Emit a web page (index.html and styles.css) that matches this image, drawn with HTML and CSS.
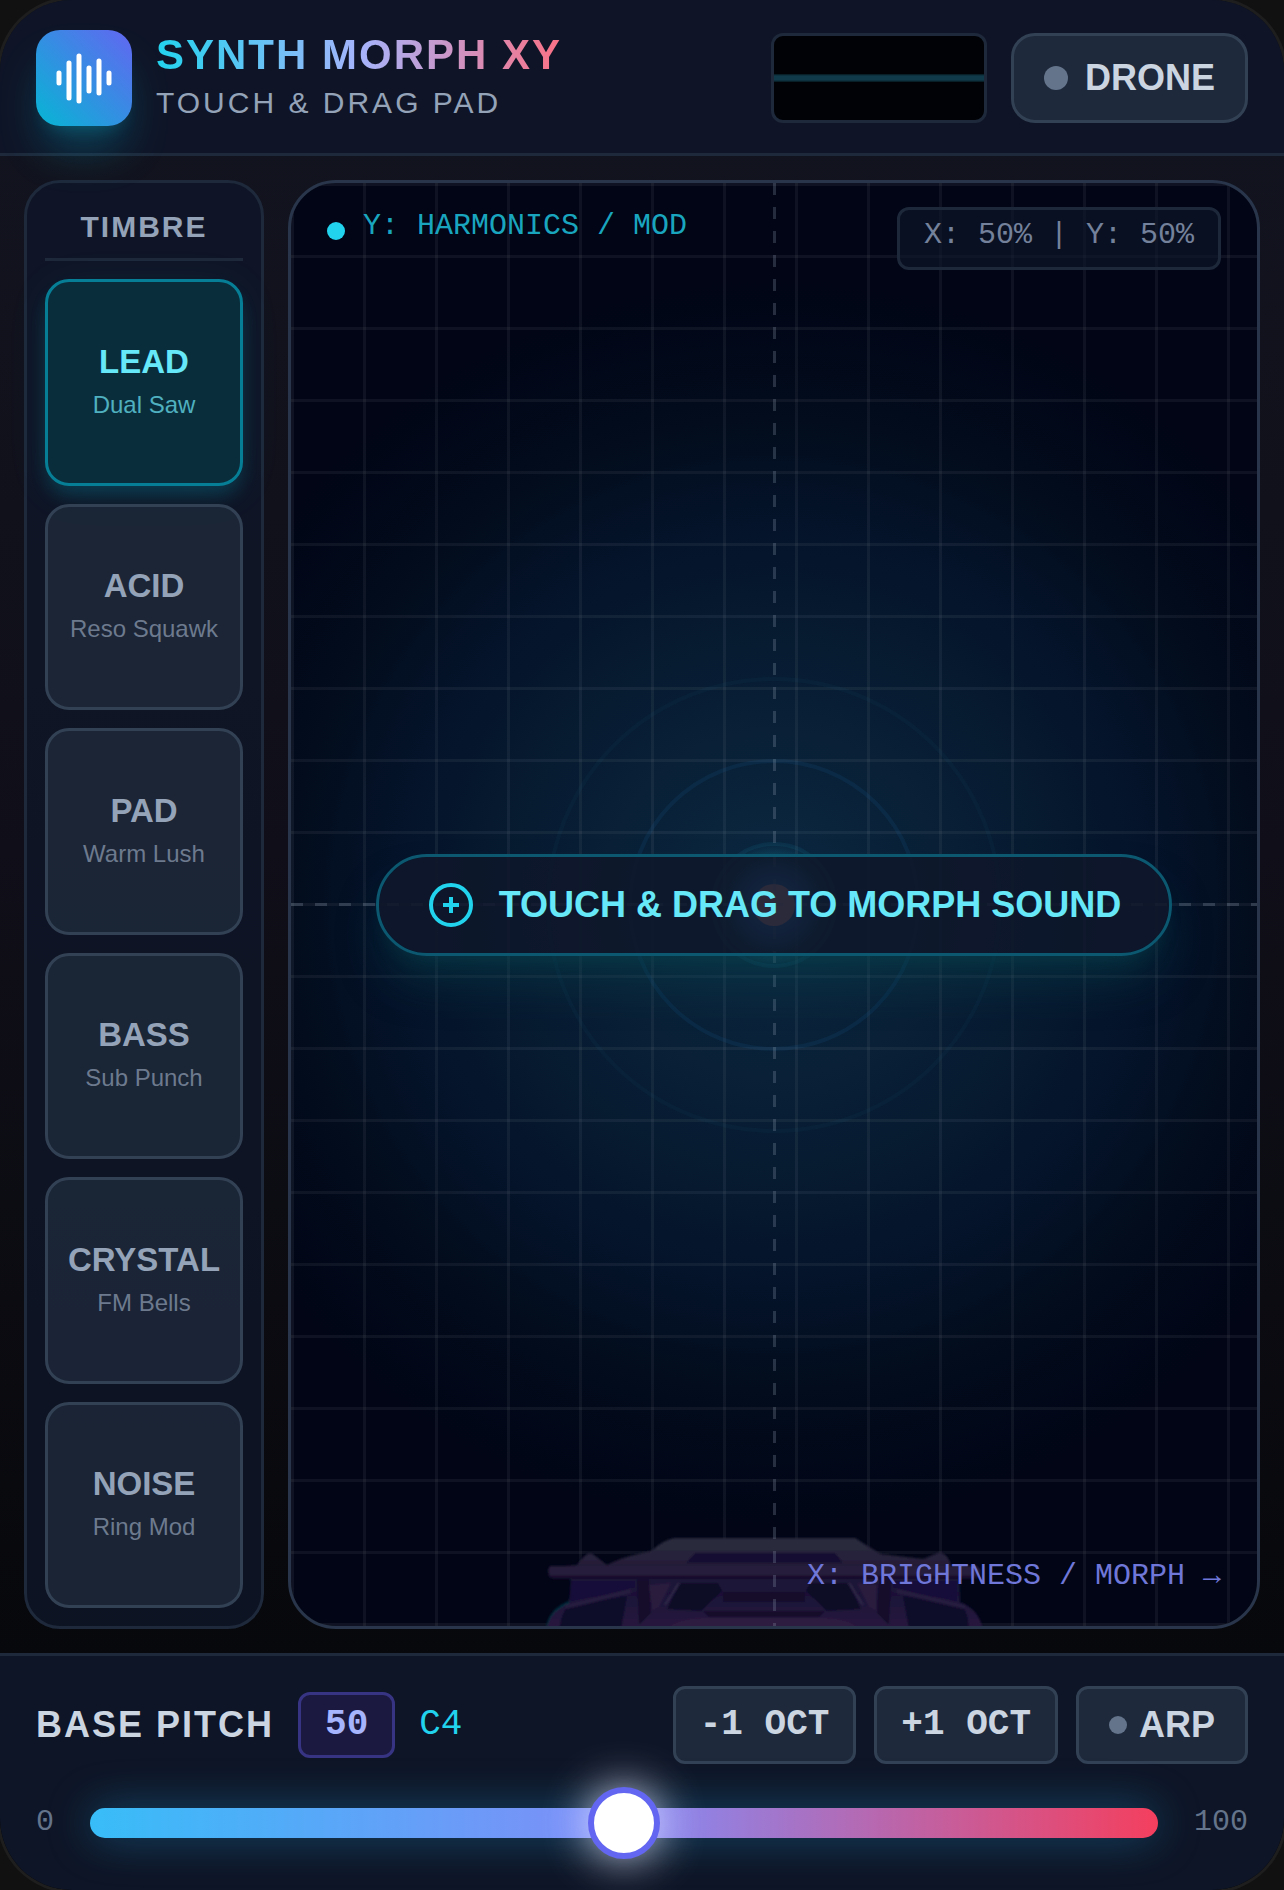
FILE: index.html
```html
<!DOCTYPE html>
<html lang="en">
<head>
    <meta charset="UTF-8">
    <meta name="viewport" content="width=device-width, initial-scale=1">
    <title>Synth Morph XY</title>
    <link rel="stylesheet" href="styles.css">
</head>
<body>
<div class="synth">
    <header class="top">
        <div class="logo">
            <svg width="60" height="60" viewBox="0 0 60 60" fill="none" stroke="#fff" stroke-width="5" stroke-linecap="round">
                <path d="M10 25v10M20 15v35M30 8v45M40 20v23M50 13v32M60 25v10"/>
            </svg>
        </div>
        <div class="title">
            <h1>SYNTH MORPH XY</h1>
            <p>TOUCH &amp; DRAG PAD</p>
        </div>
        <div class="scope"></div>
        <button type="button" class="drone"><i class="led"></i>DRONE</button>
    </header>

    <main class="main">
        <section class="timbre">
            <h2>TIMBRE</h2>
            <button type="button" class="preset active"><b>LEAD</b><span>Dual Saw</span></button>
            <button type="button" class="preset"><b>ACID</b><span>Reso Squawk</span></button>
            <button type="button" class="preset"><b>PAD</b><span>Warm Lush</span></button>
            <button type="button" class="preset"><b>BASS</b><span>Sub Punch</span></button>
            <button type="button" class="preset"><b>CRYSTAL</b><span>FM Bells</span></button>
            <button type="button" class="preset"><b>NOISE</b><span>Ring Mod</span></button>
        </section>

        <section class="pad" id="pad">
            <!-- car silhouette -->
            <svg class="car" width="460" height="105" viewBox="0 0 460 105">
                <defs>
                    <linearGradient id="body" x1="0" y1="0" x2="0" y2="1">
                        <stop offset="0" stop-color="#2c2c3e"/>
                        <stop offset=".35" stop-color="#231a38"/>
                        <stop offset=".6" stop-color="#1a1139"/>
                        <stop offset="1" stop-color="#291a3e"/>
                    </linearGradient>
                    <filter id="soft"><feGaussianBlur stdDeviation="1"/></filter>
                </defs>
                <g filter="url(#soft)">
                <path d="M11 105Q12 85 34 76L38 60 35 54 60 52 400 52 424 54 425 78Q443 86 447 105Z" fill="#04303f"/>
                <path d="M12 105Q14 86 34 79L36 54 15 53Q11 47 18 42L42 40Q50 28 56 28Q62 32 72 40Q86 32 116 26Q130 14 140 13L320 13Q334 22 346 29L388 34 405 27Q414 30 416 41L440 43Q448 47 443 53L424 54 425 77Q444 84 448 105Z" fill="url(#body)"/>
                <path d="M140 13H318Q328 18 333 25H118Q130 15 140 13Z" fill="#2a2c3e"/>
                <path d="M160 28H300L308 38H151Z" fill="#171033"/>
                <path d="M15 41H442Q448 46 443 50H15Q11 46 15 41Z" fill="#251a3a"/>
                <path d="M14 51H444L438 54H18Z" fill="#130d29"/>
                <path d="M102 55H114L116 88 104 100Z" fill="#120e2b"/>
                <path d="M356 55H344L342 88 354 100Z" fill="#120e2b"/>
                <path d="M114 60L136 58 124 82 117 86Z" fill="#2b1a3e"/>
                <path d="M342 60L322 58 334 82 341 86Z" fill="#2b1a3e"/>
                <path d="M145 58H183L187 66 166 86 132 84Z" fill="#110e28"/>
                <path d="M313 58H275L271 66 292 86 326 84Z" fill="#110e28"/>
                <path d="M188 67H270V77H188ZM168 86H290L284 92H174Z" fill="#120d2b"/>
                <path d="M144 58L130 80M314 58L328 80" stroke="#322a48" stroke-width="2"/>
                <path d="M36 56H100V62L36 76Z" fill="#180f3a"/>
                <path d="M422 56H358V62L422 76Z" fill="#180f3a"/>
                <path d="M34 79L92 71 86 105H24Q26 88 34 79Z" fill="#110d29"/>
                <path d="M426 79L368 71 374 105H434Q434 88 426 79Z" fill="#110d29"/>
                <path d="M30 82L96 66M430 82L362 66" stroke="#281c40" stroke-width="4"/>
                <path d="M130 105Q140 94 166 93H292Q316 94 326 105Z" fill="#2e1a3f"/>
                </g>
            </svg>

            <svg class="rings" width="462" height="462" viewBox="-231 -231 462 462" fill="none">
                <defs>
                    <radialGradient id="glow">
                        <stop offset="0" stop-color="#60a5fa"/>
                        <stop offset=".5" stop-color="#38a0f8" stop-opacity=".5"/>
                        <stop offset=".8" stop-color="#22d3ee" stop-opacity=".12"/>
                        <stop offset="1" stop-color="#22d3ee" stop-opacity="0"/>
                    </radialGradient>
                </defs>
                <circle r="226" stroke="#1b6a90" stroke-opacity=".08" stroke-width="4"/>
                <circle r="144" stroke="#1b6ab0" stroke-opacity=".12" stroke-width="4"/>
                <circle r="61" stroke="#22b5d0" stroke-opacity=".09" stroke-width="4"/>
                <circle r="62" fill="url(#glow)"/>
                <circle r="21" fill="#f2b0a8"/>
            </svg>

            <div class="pad-top">
                <div class="axis-y"><i></i><span>Y: HARMONICS / MOD</span></div>
                <div class="coords">X: 50% | Y: 50%</div>
            </div>
            <div class="hint">
                <svg width="48" height="48" viewBox="0 0 24 24" fill="none" stroke="#22d3ee" stroke-width="2">
                    <circle cx="12" cy="12" r="10"/>
                    <path d="M12 8v8M8 12h8"/>
                </svg>
                TOUCH &amp; DRAG TO MORPH SOUND
            </div>
            <div class="axis-x">X: BRIGHTNESS / MORPH →</div>
        </section>
    </main>

    <footer class="bottom">
        <div class="row">
            <label for="pitch">BASE PITCH</label>
            <output class="value" for="pitch">50</output>
            <span class="note">C4</span>
            <div class="btns">
                <button type="button" class="oct">-1 OCT</button>
                <button type="button" class="oct">+1 OCT</button>
                <button type="button" class="arp"><i class="led"></i>ARP</button>
            </div>
        </div>
        <div class="slide">
            <span>0</span>
            <input type="range" id="pitch" min="0" max="100" value="50">
            <span>100</span>
        </div>
    </footer>
</div>
</body>
</html>
```
FILE: styles.css
```css
* {
    margin: 0;
    padding: 0;
    box-sizing: border-box;
}
body {
    background: #111;
    color: #cbd5e1;
    font-family: "Liberation Sans", Arial, sans-serif;
    font-size: 36px;
}
button {
    font: inherit;
    font-weight: bold;
    color: #cbd5e1;
    background: #1e293b;
    border: 3px solid #334155;
    cursor: pointer;
}
.synth {
    min-height: 100vh;
    display: flex;
    flex-direction: column;
    border-radius: 72px;
    overflow: hidden;
    box-shadow: 0 0 0 3px #1e1e1e;
    background: linear-gradient(#12141f, #100f19 45%, #07080b 88%);
}

/* header */
.top {
    position: relative;
    display: flex;
    align-items: center;
    gap: 24px;
    padding: 30px 36px 27px;
    background: #0f1527;
    border-bottom: 3px solid #1e293b;
}
.logo {
    width: 96px;
    height: 96px;
    display: flex;
    align-items: center;
    justify-content: center;
    border-radius: 24px;
    background: linear-gradient(45deg, #06b6d4, #6366f1);
    box-shadow: 0 30px 45px -9px rgba(6,182,212,.3), 0 12px 18px -12px rgba(6,182,212,.3);
}
.logo svg {
    overflow: visible;
    margin-right: 10px;
}
.title {
    flex: 1;
}
.title h1 {
    width: max-content;
    font-size: 42px;
    line-height: 50px;
    letter-spacing: 2px;
    background: linear-gradient(90deg, #22d3ee, #a5b4fc 50%, #fb7185);
    -webkit-background-clip: text;
    background-clip: text;
    color: transparent;
}
.title p {
    font-size: 30px;
    line-height: 46px;
    letter-spacing: 3px;
    color: #94a3b8;
}
.scope {
    width: 216px;
    height: 90px;
    border: 3px solid #1e293b;
    border-radius: 12px;
    background: linear-gradient(transparent 38px, #06161c 38px, #103a4a 40px, #103a4a 44px, #06161c 46px, transparent 46px) #010205;
}
.led {
    width: 24px;
    height: 24px;
    border-radius: 50%;
    background: #64748b;
}
.drone {
    display: flex;
    align-items: center;
    gap: 17px;
    height: 90px;
    padding: 0 30px;
    border-radius: 24px;
}

/* timbre column + pad */
.main {
    flex: 1;
    display: flex;
    gap: 24px;
    padding: 24px;
}
.timbre {
    width: 240px;
    display: flex;
    flex-direction: column;
    gap: 18px;
    padding: 18px;
    border: 3px solid #1e293b;
    border-radius: 36px;
    background: rgba(15,23,42,.75);
}
.timbre h2 {
    padding: 3px 0 9px;
    border-bottom: 3px solid #1e293b;
    font-size: 30px;
    line-height: 45px;
    letter-spacing: 2px;
    text-align: center;
    color: #94a3b8;
}
.preset {
    flex: 1;
    display: flex;
    flex-direction: column;
    align-items: center;
    justify-content: center;
    gap: 3px;
    padding-bottom: 3px;
    border-radius: 24px;
    background: rgba(30,41,59,.8);
    color: #94a3b8;
}
.preset b {
    font-size: 33px;
    line-height: 45px;
}
.preset span {
    font-size: 24px;
    font-weight: normal;
    line-height: 36px;
    color: #6d7a8e;
}
.active {
    background: #0a2d3c;
    border-color: #067f96;
    color: #67e8f9;
    box-shadow: 0 12px 18px -3px rgba(6,182,212,.2), 0 6px 45px -6px rgba(6,182,212,.12);
}
.active span {
    color: #4fb0bf;
}
.pad {
    position: relative;
    flex: 1;
    display: grid;
    grid-template-rows: 1fr auto 1fr;
    padding: 24px 36px;
    border: 3px solid #28354a;
    border-radius: 48px;
    overflow: hidden;
    background: radial-gradient(circle at center, #0b2942, #092036 20%, #06192f 34%, #041228 46%, #020c1c 56%, #010516 72%);
    background-clip: padding-box;
    cursor: crosshair;
}
.pad:before {
    content: "";
    position: absolute;
    inset: 0;
    background:
        linear-gradient(90deg, rgba(255,255,255,.05) 3px, transparent 3px) 0 0 / 72px 72px,
        linear-gradient(rgba(255,255,255,.05) 3px, transparent 3px) 0 0 / 72px 72px;
}
/* dashed crosshair */
.pad:after {
    content: "";
    position: absolute;
    inset: 0;
    background:
        repeating-linear-gradient(#94a3b8 0 12px, transparent 12px 24px) center / 3px 100% no-repeat,
        repeating-linear-gradient(90deg, #94a3b8 0 12px, transparent 12px 24px) center / 100% 3px no-repeat;
    opacity: .25;
}
.car {
    position: absolute;
    left: 50%;
    bottom: -4px;
    margin-left: -239px;
}
.rings {
    position: absolute;
    left: 50%;
    top: 50%;
    transform: translate(-50%, -50%);
}
.pad-top {
    display: flex;
    justify-content: space-between;
    align-items: flex-start;
    z-index: 1;
}
.axis-y, .coords, .axis-x {
    font-family: "Liberation Mono", monospace;
    font-size: 30px;
    line-height: 39px;
}
.axis-y {
    display: flex;
    align-items: center;
    gap: 18px;
    color: #1aa5bf;
}
.axis-y i {
    width: 18px;
    height: 18px;
    border-radius: 50%;
    background: #22d3ee;
}
.axis-y span {
    padding-bottom: 9px;
}
.coords {
    padding: 6px 24px 12px;
    border: 3px solid #1d283a;
    border-radius: 12px;
    background: rgba(15,23,42,.6);
    color: #74819a;
}
.axis-x {
    align-self: end;
    justify-self: end;
    padding-bottom: 6px;
    color: #6f77d8;
    z-index: 1;
}
.hint {
    justify-self: center;
    display: flex;
    align-items: center;
    gap: 24px;
    padding: 24px 48px;
    border: 3px solid #0b5870;
    border-radius: 51px;
    background: rgba(15,23,42,.88);
    background-clip: padding-box;
    box-shadow: 0 30px 45px -9px rgba(8,70,80,.5), 0 12px 18px -12px rgba(8,70,80,.5);
    font-weight: bold;
    line-height: 48px;
    white-space: nowrap;
    color: #67e8f9;
    z-index: 1;
}

/* footer */
.bottom {
    padding: 30px 36px 45px;
    border-top: 3px solid #1e293b;
    background: #0e1526;
}
.row, .btns, .slide {
    display: flex;
    align-items: center;
}
.row {
    gap: 24px;
    margin-bottom: 36px;
}
.row label {
    font-weight: bold;
    letter-spacing: 2px;
}
.value, .note, .oct {
    font-family: "Liberation Mono", monospace;
    line-height: 48px;
}
.value {
    padding: 6px 24px;
    border: 3px solid #373483;
    border-radius: 12px;
    background: #1c1940;
    font-weight: bold;
    color: #a5b4fc;
}
.note {
    color: #22d3ee;
}
.btns {
    gap: 18px;
    margin-left: auto;
}
.btns button {
    height: 78px;
    border-radius: 12px;
}
.oct {
    padding: 0 24px;
}
.arp {
    display: flex;
    align-items: center;
    gap: 12px;
    padding: 0 30px;
}
.arp .led {
    width: 18px;
    height: 18px;
}
.slide {
    gap: 36px;
    font-family: "Liberation Mono", monospace;
    font-size: 30px;
    line-height: 45px;
    color: #64748b;
}
.slide input {
    flex: 1;
    min-width: 0;
    height: 30px;
    -webkit-appearance: none;
    appearance: none;
    border-radius: 15px;
    background: linear-gradient(90deg, #38bdf8, #818cf8 50%, #f43f5e);
    box-shadow: 0 0 45px rgba(34,160,220,.4);
}
.slide input::-webkit-slider-thumb {
    -webkit-appearance: none;
    width: 72px;
    height: 72px;
    border: 6px solid #6366f1;
    border-radius: 50%;
    background: #fff;
    box-shadow: 0 0 45px rgba(235,235,255,.85);
}
```
